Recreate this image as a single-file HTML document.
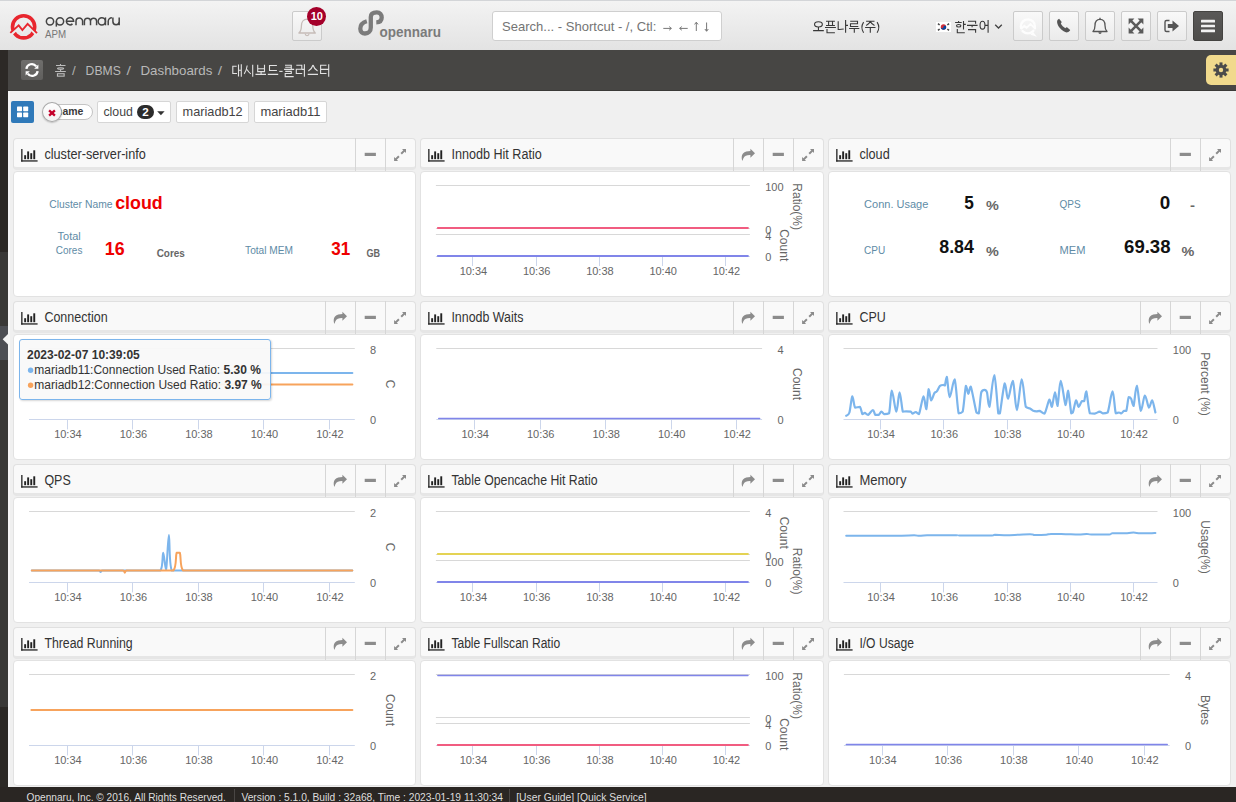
<!DOCTYPE html>
<html><head><meta charset="utf-8"><title>dashboard</title>
<style>
*{box-sizing:border-box;margin:0;padding:0}
html,body{width:1236px;height:802px;overflow:hidden}
body{position:relative;background:#f0f0f0;font-family:"Liberation Sans",sans-serif;color:#333}
.a{position:absolute}
#hdr{left:0;top:0;width:1236px;height:50px;background:linear-gradient(#f3f3f3,#e3e3e3);border-top:1px solid #d3d5d8}
#bc{left:0;top:50px;width:1236px;height:40.5px;background:#474644;border-bottom:1px solid #3b3a38}
#foot{left:0;top:786.7px;width:1236px;height:16px;background:#2a2623;color:#dcdcdc;font-size:11.5px;line-height:16px;white-space:nowrap}
.hb{width:30px;height:30px;border:1px solid #cbcbcb;border-radius:2px;background:linear-gradient(#f9f9f9,#ebebeb)}
.ph{height:32px;background:#f9f9f9;border:1px solid #e0e0e0;border-bottom:3px solid #e6e6e6;border-radius:4px}
.pb{background:#fff;border:1px solid #e2e2e2;border-radius:4px}
.pt{left:30px;top:6px;font-size:14px;color:#333;white-space:nowrap;line-height:16px}
.dv{top:-1px;width:1px;height:33px;background:#d6d6d6}
.tag{height:21px;border:1px solid #d6d6d6;background:#fff;border-radius:2px;font-size:13.5px;color:#555;line-height:19px;white-space:nowrap;text-align:center}
.lb{color:#5f8ba5;font-size:11.5px;white-space:nowrap}
.rv{color:#e80000;font-weight:bold;white-space:nowrap}
.un{color:#555;font-weight:bold;font-size:11px;white-space:nowrap}
.bv{color:#111;font-weight:bold;font-size:18.5px;white-space:nowrap}
.bu{color:#555;font-weight:bold;font-size:13px;white-space:nowrap}
</style></head><body>
<div id="hdr" class="a"></div>
<svg class="a" style="left:8px;top:11px" width="34" height="32" viewBox="0 0 34 32">
<circle cx="15.6" cy="15.8" r="11.1" fill="none" stroke="#e8262e" stroke-width="3.6"/>
<polyline points="2.3,23.9 10.7,16.5 14.4,21.2 19.6,14.9 29,24.2" fill="none" stroke="#ededed" stroke-width="2.6"/>
<polyline points="2.3,21.9 10.7,14.4 14.4,19.1 19.6,12.8 29,22.1" fill="none" stroke="#e8262e" stroke-width="1.9"/>
</svg>
<svg class="a" style="left:44px;top:14px" width="80" height="16" viewBox="0 0 80 16">
<g fill="none" stroke="#444" stroke-width="1.5" stroke-linecap="butt">
<circle cx="6" cy="7.3" r="3.65"/>
<circle cx="16" cy="7.3" r="3.65"/><line x1="12.35" y1="7.3" x2="12.35" y2="12.6"/>
<path d="M22.25 7.3 H29.65 A3.65 3.65 0 1 0 28.5 9.9"/>
<path d="M32 11.3 V7.3 A3.3 3.3 0 0 1 38.6 7.3 V11.3"/>
<path d="M40.4 11.3 V7.3 A3.05 3.05 0 0 1 46.5 7.3 V11.3 M46.5 7.3 A3.05 3.05 0 0 1 52.6 7.3 V11.3"/>
<circle cx="57.8" cy="7.3" r="3.65"/><line x1="61.45" y1="3.4" x2="61.45" y2="11.3"/>
<path d="M64.2 11.3 V7.3 A3.7 3.7 0 0 1 67.9 3.65"/>
<path d="M68.9 3.4 V7.5 A3.15 3.15 0 0 0 75.2 7.5 M75.2 3.4 V11.3"/>
</g></svg>
<div class="a hb" style="left:292px;top:11px;width:30px;height:30px"></div>
<svg class="a" style="left:280px;top:0" width="50" height="50" viewBox="280 0 50 50">
<path d="M298.9 33 C300.9 31.3 301.4 29 301.4 26 C301.4 21.8 303.9 19.2 307.1 19.2 C310.3 19.2 312.8 21.8 312.8 26 C312.8 29 313.3 31.3 315.3 33 Z" fill="none" stroke="#c6bcb8" stroke-width="1.3" stroke-linejoin="round"/>
<path d="M305.2 33.8 A1.9 1.9 0 0 0 309 33.8" fill="none" stroke="#c6bcb8" stroke-width="1.2"/>
</svg>
<div class="a" style="left:307.4px;top:7px;width:18.8px;height:18.8px;border-radius:50%;background:#a4002a;color:#fff;font-size:11px;font-weight:bold;text-align:center;line-height:18.8px">10</div>
<svg class="a" style="left:0;top:0" width="460" height="50" viewBox="0 0 460 50">
<path d="M366.8 21.3 C362.5 22.5 360.3 25.5 360.3 28.8 C360.3 32 362.5 33.5 365 33.5 C368.5 33.5 370.8 31 370.8 27.5 V17 C370.8 13.5 373.5 12.4 376.8 12.4 C380 12.4 381.7 14.8 381.7 17.5 C381.7 20.5 379.5 22.2 376.3 22.3" fill="none" stroke="#7b7b7b" stroke-width="4.3"/>
</svg><div class="a" style="left:492px;top:11px;width:230px;height:30px;background:#fff;border:1px solid #cfcfcf;border-radius:3px"></div>
<svg class="a" style="left:660px;top:20px" width="52" height="14" viewBox="0 0 52 14"><g stroke="#777" stroke-width="1" fill="none">
<line x1="3.3" y1="8.4" x2="11.2" y2="8.4"/><polyline points="9.2,6.6 11.4,8.4 9.2,10.2"/>
<line x1="19.8" y1="8.4" x2="27.7" y2="8.4"/><polyline points="21.8,6.6 19.6,8.4 21.8,10.2"/>
<line x1="36.3" y1="2.5" x2="36.3" y2="11"/><polyline points="34.6,4.4 36.3,2.2 38,4.4"/>
<line x1="46.6" y1="2.5" x2="46.6" y2="11"/><polyline points="44.9,9 46.6,11.3 48.3,9"/>
</g></svg>
<svg class="a" style="left:935.5px;top:21.5px" width="15" height="10" viewBox="0 0 15 10">
<rect width="15" height="10" fill="#fff"/>
<circle cx="7.5" cy="5" r="2.7" fill="#cd2e3a"/>
<path d="M4.8 5 A2.7 2.7 0 0 0 10.2 5 A1.35 1.35 0 0 0 7.5 5 A1.35 1.35 0 0 1 4.8 5" fill="#0047a0"/>
<g stroke="#444" stroke-width="1.5"><line x1="2" y1="1.6" x2="3.6" y2="3"/><line x1="11.4" y1="7" x2="13" y2="8.4"/><line x1="13" y1="1.6" x2="11.4" y2="3"/><line x1="3.6" y1="7" x2="2" y2="8.4"/></g>
</svg>
<svg class="a" style="left:994px;top:22.5px" width="9" height="7" viewBox="0 0 9 7"><polyline points="1.2,1.8 4.5,5 7.8,1.8" fill="none" stroke="#444" stroke-width="1.3"/></svg>
<div class="a hb" style="left:1013px;top:11px;height:30px"></div>
<div class="a hb" style="left:1049px;top:11px;height:30px"></div>
<div class="a hb" style="left:1085px;top:11px;height:30px"></div>
<div class="a hb" style="left:1121px;top:11px;height:30px"></div>
<div class="a hb" style="left:1157px;top:11px;height:30px"></div>
<div class="a" style="left:1193px;top:11px;width:30px;height:30px;border-radius:2px;background:linear-gradient(#5a5958,#4e4d4b);border:1px solid #444341"></div>
<svg class="a" style="left:1013px;top:11px" width="216" height="30" viewBox="0 0 216 30">
<g transform="translate(14.9,15.4)">
 <circle cx="0" cy="0" r="7.05" fill="none" stroke="#fdfdfd" stroke-width="2.3"/>
 <polyline points="-7.8,3.9 -3.6,0.7 -1.3,2.5 2.7,-1.1 7.9,3.9" fill="none" stroke="#f1f1f1" stroke-width="2.2"/>
 <polyline points="-7.1,2.7 -3.6,-0.5 -1.3,1.3 2.7,-2.3 7.7,2.7" fill="none" stroke="#fdfdfd" stroke-width="2"/>
 <path d="M5.2 5.6 L9 10.3 L2.6 8.3 Z" fill="#fdfdfd"/>
</g>
<g transform="translate(50.8,14.5) scale(1.1)">
 <path d="M-5.5 -5.2 C-6.5 -4 -6.3 -1.5 -4 1.8 C-1.6 4.8 1.5 6.6 3.3 6.2 C4.5 6 5.6 5 5.8 4.2 L3.2 1.8 C2.6 1.5 2 1.8 1.4 2.4 C0 1.9 -2.2 -0.5 -2.7 -1.8 C-2.1 -2.4 -1.8 -3 -2.2 -3.7 L-4.3 -6.2 C-4.7 -6.1 -5.1 -5.7 -5.5 -5.2 Z" fill="#555"/>
</g>
<g transform="translate(87,15)">
 <path d="M-7 5.5 C-5.5 4 -5 2.6 -5 -0.5 C-5 -4.5 -3 -6.6 0 -6.6 C3 -6.6 5 -4.5 5 -0.5 C5 2.6 5.5 4 7 5.5 Z" fill="none" stroke="#555" stroke-width="1.3" stroke-linejoin="round"/>
 <line x1="0" y1="-8.2" x2="0" y2="-6.6" stroke="#555" stroke-width="1.3"/>
 <path d="M-1.6 6.3 A1.6 1.6 0 0 0 1.6 6.3" fill="#555"/>
</g>
<g transform="translate(123,15)" fill="#5a5a5a">
 <path d="M-7.4 -7.4 H-1.6 L-7.4 -1.6 Z"/><path d="M7.4 -7.4 V-1.6 L1.6 -7.4 Z"/><path d="M-7.4 7.4 V1.6 L-1.6 7.4 Z"/><path d="M7.4 7.4 H1.6 L7.4 1.6 Z"/>
 <path d="M-4.8 -4.8 L4.8 4.8 M4.8 -4.8 L-4.8 4.8" stroke="#5a5a5a" stroke-width="2.5"/>
</g>
<g transform="translate(159,15)">
 <path d="M-2.5 -5.5 H-5.5 C-6.3 -5.5 -7 -4.8 -7 -4 V4 C-7 4.8 -6.3 5.5 -5.5 5.5 H-2.5" fill="none" stroke="#555" stroke-width="1.4"/>
 <path d="M-4.2 -2 H0.5 V-5.5 L7 0 L0.5 5.5 V2 H-4.2 Z" fill="#555"/>
</g>
<g transform="translate(195,15)" fill="#f2f2f2">
 <rect x="-7" y="-6.2" width="14" height="2.6" rx="0.5"/><rect x="-7" y="-1.3" width="14" height="2.6" rx="0.5"/><rect x="-7" y="3.6" width="14" height="2.6" rx="0.5"/>
</g>
</svg>
<div id="bc" class="a"></div>
<div class="a" style="left:21.1px;top:60.1px;width:21.7px;height:19.7px;background:linear-gradient(#6f6e6c,#605f5d);border-radius:2px"></div>
<svg class="a" style="left:22.3px;top:59.9px" width="20" height="20" viewBox="-10 -10 20 20">
<g fill="#fff"><path d="M-5.6 -1.1 A5.4 5.4 0 0 1 4.2 -3.6" fill="none" stroke="#fff" stroke-width="2.3"/>
<path d="M6.4 -5.4 V-1.2 H2.2 Z"/>
<path d="M5.6 1.1 A5.4 5.4 0 0 1 -4.2 3.6" fill="none" stroke="#fff" stroke-width="2.3"/>
<path d="M-6.4 5.4 V1.2 H-2.2 Z"/></g></svg>
<div class="a" style="left:1206px;top:54.7px;width:36px;height:30.2px;background:#f1da8d;border-radius:5px"></div>
<svg class="a" style="left:1212px;top:61px" width="18" height="18" viewBox="-9 -9 18 18">
<g fill="#4b4b4b">
<rect x="-1.5" y="-7.6" width="3" height="4" transform="rotate(0)"/><rect x="-1.5" y="-7.6" width="3" height="4" transform="rotate(45)"/><rect x="-1.5" y="-7.6" width="3" height="4" transform="rotate(90)"/><rect x="-1.5" y="-7.6" width="3" height="4" transform="rotate(135)"/><rect x="-1.5" y="-7.6" width="3" height="4" transform="rotate(180)"/><rect x="-1.5" y="-7.6" width="3" height="4" transform="rotate(225)"/><rect x="-1.5" y="-7.6" width="3" height="4" transform="rotate(270)"/><rect x="-1.5" y="-7.6" width="3" height="4" transform="rotate(315)"/><circle r="5.3"/></g><circle r="2.2" fill="#f1da8d"/></svg>
<div class="a" style="left:0;top:50px;width:8px;height:202px;background:#2c2926"></div>
<div class="a" style="left:0;top:252px;width:8px;height:73.5px;background:#3a3937"></div>
<div class="a" style="left:0;top:326px;width:8px;height:34px;background:#4d4f54"></div>
<svg class="a" style="left:2px;top:333.5px" width="6" height="11" viewBox="0 0 6 11"><path d="M6 0 L0.7 5.2 L6 10.4 Z" fill="#f4f4f4"/></svg>
<div class="a" style="left:0;top:360px;width:8px;height:347px;background:#3a3937"></div>
<div class="a" style="left:0;top:707px;width:8px;height:80px;background:#2c2926"></div>
<div class="a" style="left:8px;top:90.5px;width:1.5px;height:696px;background:#f6f6f6"></div>
<div class="a" style="left:11px;top:101px;width:23px;height:22px;background:#2f79b9;border-radius:2px"></div>
<svg class="a" style="left:11px;top:101px" width="23" height="22" viewBox="0 0 23 22"><g fill="#fff">
<rect x="6" y="5.6" width="5" height="4.6" rx="0.6"/><rect x="12.2" y="5.6" width="5" height="4.6" rx="0.6"/>
<rect x="6" y="11.6" width="5" height="4.6" rx="0.6"/><rect x="12.2" y="11.6" width="5" height="4.6" rx="0.6"/></g></svg>
<div class="a" style="left:47px;top:104.3px;width:46px;height:15.8px;background:#fff;border:1px solid #c4c4c4;border-radius:8px"></div>
<div class="a" style="left:56.4px;top:106.4px;font-size:11px;line-height:11px;font-weight:bold;color:#3a3a3a;white-space:nowrap;transform:scaleX(0.95);transform-origin:0 0">name</div>
<div class="a" style="left:42.1px;top:102.2px;width:19.8px;height:20px;border-radius:50%;background:linear-gradient(#fdfdfd,#f3f3f3);border:1px solid #a9a9a9;box-shadow:0 1px 1.5px rgba(0,0,0,0.2)"></div>
<svg class="a" style="left:47.2px;top:107.5px" width="10" height="10" viewBox="0 0 10 10"><g stroke="#c4002b" stroke-width="2.3"><line x1="2.1" y1="2.3" x2="7.9" y2="7.7"/><line x1="7.9" y1="2.3" x2="2.1" y2="7.7"/></g></svg>
<div class="a tag" style="left:97px;top:101px;width:74px;height:22px"></div>

<div class="a" style="left:137.1px;top:104.8px;width:16.8px;height:14px;border-radius:7px;background:#2b2b2b"></div>
<svg class="a" style="left:157px;top:110.7px" width="8" height="5" viewBox="0 0 8 5"><path d="M0.2 0.2 H7.6 L3.9 4.3 Z" fill="#333"/></svg>
<div class="a tag" style="left:176px;top:101px;width:73px;height:22px"></div>
<div class="a tag" style="left:254px;top:101px;width:73px;height:22px"></div>

<div class="a ph" style="left:13px;top:138px;width:403px"><svg class="a" style="left:6.6px;top:9.5px" width="18" height="14" viewBox="0 0 18 14"><g fill="#222">
<rect x="0.2" y="0" width="1.3" height="12.6"/><rect x="0.2" y="11.3" width="16.4" height="1.3"/>
<rect x="3.2" y="6.2" width="1.9" height="4"/><rect x="6.2" y="2.4" width="1.9" height="7.8"/><rect x="9.3" y="4.2" width="1.9" height="6"/><rect x="12.3" y="1.3" width="1.9" height="8.9"/></g></svg><div class="a dv" style="left:371px"></div><div class="a dv" style="left:341px"></div></div>
<svg class="a" style="left:326px;top:138px" width="90" height="32" viewBox="0 0 90 32"><g fill="#8c8c8c">
<rect x="38.7" y="14.8" width="11.2" height="3.2"/>
<path d="M76 11 H80 V15 Z M68.1 19 V23 H72.1 Z"/><path d="M78.6 12.4 L75.2 15.8 M72.9 18.2 L69.5 21.6" stroke="#8c8c8c" stroke-width="2"/></g></svg>
<div class="a pb" style="left:13px;top:171px;width:403px;height:126px"></div>
<div class="a ph" style="left:420px;top:138px;width:404px"><svg class="a" style="left:6.6px;top:9.5px" width="18" height="14" viewBox="0 0 18 14"><g fill="#222">
<rect x="0.2" y="0" width="1.3" height="12.6"/><rect x="0.2" y="11.3" width="16.4" height="1.3"/>
<rect x="3.2" y="6.2" width="1.9" height="4"/><rect x="6.2" y="2.4" width="1.9" height="7.8"/><rect x="9.3" y="4.2" width="1.9" height="6"/><rect x="12.3" y="1.3" width="1.9" height="8.9"/></g></svg><div class="a dv" style="left:372px"></div><div class="a dv" style="left:342px"></div><div class="a dv" style="left:312px"></div></div>
<svg class="a" style="left:734px;top:138px" width="90" height="32" viewBox="0 0 90 32"><g fill="#8c8c8c">
<rect x="38.7" y="14.8" width="11.2" height="3.2"/>
<path d="M76 11 H80 V15 Z M68.1 19 V23 H72.1 Z"/><path d="M78.6 12.4 L75.2 15.8 M72.9 18.2 L69.5 21.6" stroke="#8c8c8c" stroke-width="2"/><path d="M16.4 10.8 L21 15.2 L16.4 19.7 V17.1 C13 17 10.5 17.8 9.3 20.5 L8.4 23.1 C7.3 20 7.4 17.5 9 15.5 C10.8 13.5 13.5 12.9 16.4 12.9 Z"/></g></svg>
<div class="a pb" style="left:420px;top:171px;width:404px;height:126px"></div>
<div class="a ph" style="left:828px;top:138px;width:403px"><svg class="a" style="left:6.6px;top:9.5px" width="18" height="14" viewBox="0 0 18 14"><g fill="#222">
<rect x="0.2" y="0" width="1.3" height="12.6"/><rect x="0.2" y="11.3" width="16.4" height="1.3"/>
<rect x="3.2" y="6.2" width="1.9" height="4"/><rect x="6.2" y="2.4" width="1.9" height="7.8"/><rect x="9.3" y="4.2" width="1.9" height="6"/><rect x="12.3" y="1.3" width="1.9" height="8.9"/></g></svg><div class="a dv" style="left:371px"></div><div class="a dv" style="left:341px"></div></div>
<svg class="a" style="left:1141px;top:138px" width="90" height="32" viewBox="0 0 90 32"><g fill="#8c8c8c">
<rect x="38.7" y="14.8" width="11.2" height="3.2"/>
<path d="M76 11 H80 V15 Z M68.1 19 V23 H72.1 Z"/><path d="M78.6 12.4 L75.2 15.8 M72.9 18.2 L69.5 21.6" stroke="#8c8c8c" stroke-width="2"/></g></svg>
<div class="a pb" style="left:828px;top:171px;width:403px;height:126px"></div>
<div class="a ph" style="left:13px;top:301px;width:403px"><svg class="a" style="left:6.6px;top:9.5px" width="18" height="14" viewBox="0 0 18 14"><g fill="#222">
<rect x="0.2" y="0" width="1.3" height="12.6"/><rect x="0.2" y="11.3" width="16.4" height="1.3"/>
<rect x="3.2" y="6.2" width="1.9" height="4"/><rect x="6.2" y="2.4" width="1.9" height="7.8"/><rect x="9.3" y="4.2" width="1.9" height="6"/><rect x="12.3" y="1.3" width="1.9" height="8.9"/></g></svg><div class="a dv" style="left:371px"></div><div class="a dv" style="left:341px"></div><div class="a dv" style="left:311px"></div></div>
<svg class="a" style="left:326px;top:301px" width="90" height="32" viewBox="0 0 90 32"><g fill="#8c8c8c">
<rect x="38.7" y="14.8" width="11.2" height="3.2"/>
<path d="M76 11 H80 V15 Z M68.1 19 V23 H72.1 Z"/><path d="M78.6 12.4 L75.2 15.8 M72.9 18.2 L69.5 21.6" stroke="#8c8c8c" stroke-width="2"/><path d="M16.4 10.8 L21 15.2 L16.4 19.7 V17.1 C13 17 10.5 17.8 9.3 20.5 L8.4 23.1 C7.3 20 7.4 17.5 9 15.5 C10.8 13.5 13.5 12.9 16.4 12.9 Z"/></g></svg>
<div class="a pb" style="left:13px;top:334px;width:403px;height:126px"></div>
<div class="a ph" style="left:420px;top:301px;width:404px"><svg class="a" style="left:6.6px;top:9.5px" width="18" height="14" viewBox="0 0 18 14"><g fill="#222">
<rect x="0.2" y="0" width="1.3" height="12.6"/><rect x="0.2" y="11.3" width="16.4" height="1.3"/>
<rect x="3.2" y="6.2" width="1.9" height="4"/><rect x="6.2" y="2.4" width="1.9" height="7.8"/><rect x="9.3" y="4.2" width="1.9" height="6"/><rect x="12.3" y="1.3" width="1.9" height="8.9"/></g></svg><div class="a dv" style="left:372px"></div><div class="a dv" style="left:342px"></div><div class="a dv" style="left:312px"></div></div>
<svg class="a" style="left:734px;top:301px" width="90" height="32" viewBox="0 0 90 32"><g fill="#8c8c8c">
<rect x="38.7" y="14.8" width="11.2" height="3.2"/>
<path d="M76 11 H80 V15 Z M68.1 19 V23 H72.1 Z"/><path d="M78.6 12.4 L75.2 15.8 M72.9 18.2 L69.5 21.6" stroke="#8c8c8c" stroke-width="2"/><path d="M16.4 10.8 L21 15.2 L16.4 19.7 V17.1 C13 17 10.5 17.8 9.3 20.5 L8.4 23.1 C7.3 20 7.4 17.5 9 15.5 C10.8 13.5 13.5 12.9 16.4 12.9 Z"/></g></svg>
<div class="a pb" style="left:420px;top:334px;width:404px;height:126px"></div>
<div class="a ph" style="left:828px;top:301px;width:403px"><svg class="a" style="left:6.6px;top:9.5px" width="18" height="14" viewBox="0 0 18 14"><g fill="#222">
<rect x="0.2" y="0" width="1.3" height="12.6"/><rect x="0.2" y="11.3" width="16.4" height="1.3"/>
<rect x="3.2" y="6.2" width="1.9" height="4"/><rect x="6.2" y="2.4" width="1.9" height="7.8"/><rect x="9.3" y="4.2" width="1.9" height="6"/><rect x="12.3" y="1.3" width="1.9" height="8.9"/></g></svg><div class="a dv" style="left:371px"></div><div class="a dv" style="left:341px"></div><div class="a dv" style="left:311px"></div></div>
<svg class="a" style="left:1141px;top:301px" width="90" height="32" viewBox="0 0 90 32"><g fill="#8c8c8c">
<rect x="38.7" y="14.8" width="11.2" height="3.2"/>
<path d="M76 11 H80 V15 Z M68.1 19 V23 H72.1 Z"/><path d="M78.6 12.4 L75.2 15.8 M72.9 18.2 L69.5 21.6" stroke="#8c8c8c" stroke-width="2"/><path d="M16.4 10.8 L21 15.2 L16.4 19.7 V17.1 C13 17 10.5 17.8 9.3 20.5 L8.4 23.1 C7.3 20 7.4 17.5 9 15.5 C10.8 13.5 13.5 12.9 16.4 12.9 Z"/></g></svg>
<div class="a pb" style="left:828px;top:334px;width:403px;height:126px"></div>
<div class="a ph" style="left:13px;top:464px;width:403px"><svg class="a" style="left:6.6px;top:9.5px" width="18" height="14" viewBox="0 0 18 14"><g fill="#222">
<rect x="0.2" y="0" width="1.3" height="12.6"/><rect x="0.2" y="11.3" width="16.4" height="1.3"/>
<rect x="3.2" y="6.2" width="1.9" height="4"/><rect x="6.2" y="2.4" width="1.9" height="7.8"/><rect x="9.3" y="4.2" width="1.9" height="6"/><rect x="12.3" y="1.3" width="1.9" height="8.9"/></g></svg><div class="a dv" style="left:371px"></div><div class="a dv" style="left:341px"></div><div class="a dv" style="left:311px"></div></div>
<svg class="a" style="left:326px;top:464px" width="90" height="32" viewBox="0 0 90 32"><g fill="#8c8c8c">
<rect x="38.7" y="14.8" width="11.2" height="3.2"/>
<path d="M76 11 H80 V15 Z M68.1 19 V23 H72.1 Z"/><path d="M78.6 12.4 L75.2 15.8 M72.9 18.2 L69.5 21.6" stroke="#8c8c8c" stroke-width="2"/><path d="M16.4 10.8 L21 15.2 L16.4 19.7 V17.1 C13 17 10.5 17.8 9.3 20.5 L8.4 23.1 C7.3 20 7.4 17.5 9 15.5 C10.8 13.5 13.5 12.9 16.4 12.9 Z"/></g></svg>
<div class="a pb" style="left:13px;top:497px;width:403px;height:126px"></div>
<div class="a ph" style="left:420px;top:464px;width:404px"><svg class="a" style="left:6.6px;top:9.5px" width="18" height="14" viewBox="0 0 18 14"><g fill="#222">
<rect x="0.2" y="0" width="1.3" height="12.6"/><rect x="0.2" y="11.3" width="16.4" height="1.3"/>
<rect x="3.2" y="6.2" width="1.9" height="4"/><rect x="6.2" y="2.4" width="1.9" height="7.8"/><rect x="9.3" y="4.2" width="1.9" height="6"/><rect x="12.3" y="1.3" width="1.9" height="8.9"/></g></svg><div class="a dv" style="left:372px"></div><div class="a dv" style="left:342px"></div><div class="a dv" style="left:312px"></div></div>
<svg class="a" style="left:734px;top:464px" width="90" height="32" viewBox="0 0 90 32"><g fill="#8c8c8c">
<rect x="38.7" y="14.8" width="11.2" height="3.2"/>
<path d="M76 11 H80 V15 Z M68.1 19 V23 H72.1 Z"/><path d="M78.6 12.4 L75.2 15.8 M72.9 18.2 L69.5 21.6" stroke="#8c8c8c" stroke-width="2"/><path d="M16.4 10.8 L21 15.2 L16.4 19.7 V17.1 C13 17 10.5 17.8 9.3 20.5 L8.4 23.1 C7.3 20 7.4 17.5 9 15.5 C10.8 13.5 13.5 12.9 16.4 12.9 Z"/></g></svg>
<div class="a pb" style="left:420px;top:497px;width:404px;height:126px"></div>
<div class="a ph" style="left:828px;top:464px;width:403px"><svg class="a" style="left:6.6px;top:9.5px" width="18" height="14" viewBox="0 0 18 14"><g fill="#222">
<rect x="0.2" y="0" width="1.3" height="12.6"/><rect x="0.2" y="11.3" width="16.4" height="1.3"/>
<rect x="3.2" y="6.2" width="1.9" height="4"/><rect x="6.2" y="2.4" width="1.9" height="7.8"/><rect x="9.3" y="4.2" width="1.9" height="6"/><rect x="12.3" y="1.3" width="1.9" height="8.9"/></g></svg><div class="a dv" style="left:371px"></div><div class="a dv" style="left:341px"></div><div class="a dv" style="left:311px"></div></div>
<svg class="a" style="left:1141px;top:464px" width="90" height="32" viewBox="0 0 90 32"><g fill="#8c8c8c">
<rect x="38.7" y="14.8" width="11.2" height="3.2"/>
<path d="M76 11 H80 V15 Z M68.1 19 V23 H72.1 Z"/><path d="M78.6 12.4 L75.2 15.8 M72.9 18.2 L69.5 21.6" stroke="#8c8c8c" stroke-width="2"/><path d="M16.4 10.8 L21 15.2 L16.4 19.7 V17.1 C13 17 10.5 17.8 9.3 20.5 L8.4 23.1 C7.3 20 7.4 17.5 9 15.5 C10.8 13.5 13.5 12.9 16.4 12.9 Z"/></g></svg>
<div class="a pb" style="left:828px;top:497px;width:403px;height:126px"></div>
<div class="a ph" style="left:13px;top:627px;width:403px"><svg class="a" style="left:6.6px;top:9.5px" width="18" height="14" viewBox="0 0 18 14"><g fill="#222">
<rect x="0.2" y="0" width="1.3" height="12.6"/><rect x="0.2" y="11.3" width="16.4" height="1.3"/>
<rect x="3.2" y="6.2" width="1.9" height="4"/><rect x="6.2" y="2.4" width="1.9" height="7.8"/><rect x="9.3" y="4.2" width="1.9" height="6"/><rect x="12.3" y="1.3" width="1.9" height="8.9"/></g></svg><div class="a dv" style="left:371px"></div><div class="a dv" style="left:341px"></div><div class="a dv" style="left:311px"></div></div>
<svg class="a" style="left:326px;top:627px" width="90" height="32" viewBox="0 0 90 32"><g fill="#8c8c8c">
<rect x="38.7" y="14.8" width="11.2" height="3.2"/>
<path d="M76 11 H80 V15 Z M68.1 19 V23 H72.1 Z"/><path d="M78.6 12.4 L75.2 15.8 M72.9 18.2 L69.5 21.6" stroke="#8c8c8c" stroke-width="2"/><path d="M16.4 10.8 L21 15.2 L16.4 19.7 V17.1 C13 17 10.5 17.8 9.3 20.5 L8.4 23.1 C7.3 20 7.4 17.5 9 15.5 C10.8 13.5 13.5 12.9 16.4 12.9 Z"/></g></svg>
<div class="a pb" style="left:13px;top:660px;width:403px;height:126px"></div>
<div class="a ph" style="left:420px;top:627px;width:404px"><svg class="a" style="left:6.6px;top:9.5px" width="18" height="14" viewBox="0 0 18 14"><g fill="#222">
<rect x="0.2" y="0" width="1.3" height="12.6"/><rect x="0.2" y="11.3" width="16.4" height="1.3"/>
<rect x="3.2" y="6.2" width="1.9" height="4"/><rect x="6.2" y="2.4" width="1.9" height="7.8"/><rect x="9.3" y="4.2" width="1.9" height="6"/><rect x="12.3" y="1.3" width="1.9" height="8.9"/></g></svg><div class="a dv" style="left:372px"></div><div class="a dv" style="left:342px"></div><div class="a dv" style="left:312px"></div></div>
<svg class="a" style="left:734px;top:627px" width="90" height="32" viewBox="0 0 90 32"><g fill="#8c8c8c">
<rect x="38.7" y="14.8" width="11.2" height="3.2"/>
<path d="M76 11 H80 V15 Z M68.1 19 V23 H72.1 Z"/><path d="M78.6 12.4 L75.2 15.8 M72.9 18.2 L69.5 21.6" stroke="#8c8c8c" stroke-width="2"/><path d="M16.4 10.8 L21 15.2 L16.4 19.7 V17.1 C13 17 10.5 17.8 9.3 20.5 L8.4 23.1 C7.3 20 7.4 17.5 9 15.5 C10.8 13.5 13.5 12.9 16.4 12.9 Z"/></g></svg>
<div class="a pb" style="left:420px;top:660px;width:404px;height:126px"></div>
<div class="a ph" style="left:828px;top:627px;width:403px"><svg class="a" style="left:6.6px;top:9.5px" width="18" height="14" viewBox="0 0 18 14"><g fill="#222">
<rect x="0.2" y="0" width="1.3" height="12.6"/><rect x="0.2" y="11.3" width="16.4" height="1.3"/>
<rect x="3.2" y="6.2" width="1.9" height="4"/><rect x="6.2" y="2.4" width="1.9" height="7.8"/><rect x="9.3" y="4.2" width="1.9" height="6"/><rect x="12.3" y="1.3" width="1.9" height="8.9"/></g></svg><div class="a dv" style="left:371px"></div><div class="a dv" style="left:341px"></div><div class="a dv" style="left:311px"></div></div>
<svg class="a" style="left:1141px;top:627px" width="90" height="32" viewBox="0 0 90 32"><g fill="#8c8c8c">
<rect x="38.7" y="14.8" width="11.2" height="3.2"/>
<path d="M76 11 H80 V15 Z M68.1 19 V23 H72.1 Z"/><path d="M78.6 12.4 L75.2 15.8 M72.9 18.2 L69.5 21.6" stroke="#8c8c8c" stroke-width="2"/><path d="M16.4 10.8 L21 15.2 L16.4 19.7 V17.1 C13 17 10.5 17.8 9.3 20.5 L8.4 23.1 C7.3 20 7.4 17.5 9 15.5 C10.8 13.5 13.5 12.9 16.4 12.9 Z"/></g></svg>
<div class="a pb" style="left:828px;top:660px;width:403px;height:126px"></div>
<div id="foot" class="a"></div><div class="a" style="left:234.3px;top:789px;width:1px;height:13px;background:#4a4644"></div><div class="a" style="left:509px;top:789px;width:1px;height:13px;background:#4a4644"></div><svg class="a" style="left:0;top:0" width="1236" height="802" font-family="Liberation Sans, sans-serif">
<line x1="435.9" y1="185.5" x2="749.9" y2="185.5" stroke="#d8d8d8" stroke-width="1"/>
<line x1="435.9" y1="228.5" x2="749.9" y2="228.5" stroke="#d8d8d8" stroke-width="1"/>
<line x1="435.9" y1="234.5" x2="749.9" y2="234.5" stroke="#d8d8d8" stroke-width="1"/>
<line x1="435.9" y1="256.5" x2="749.9" y2="256.5" stroke="#ccd6eb" stroke-width="1"/>
<line x1="472.5" y1="256" x2="472.5" y2="266" stroke="#ccd6eb" stroke-width="1"/>
<text x="473.4" y="274.5" text-anchor="middle" font-size="11" fill="#666666" textLength="27.53" lengthAdjust="spacingAndGlyphs" >10:34</text>
<line x1="536.5" y1="256" x2="536.5" y2="266" stroke="#ccd6eb" stroke-width="1"/>
<text x="536.65" y="274.5" text-anchor="middle" font-size="11" fill="#666666" textLength="27.53" lengthAdjust="spacingAndGlyphs" >10:36</text>
<line x1="599.5" y1="256" x2="599.5" y2="266" stroke="#ccd6eb" stroke-width="1"/>
<text x="599.9" y="274.5" text-anchor="middle" font-size="11" fill="#666666" textLength="27.53" lengthAdjust="spacingAndGlyphs" >10:38</text>
<line x1="662.5" y1="256" x2="662.5" y2="266" stroke="#ccd6eb" stroke-width="1"/>
<text x="663.15" y="274.5" text-anchor="middle" font-size="11" fill="#666666" textLength="27.53" lengthAdjust="spacingAndGlyphs" >10:40</text>
<line x1="725.5" y1="256" x2="725.5" y2="266" stroke="#ccd6eb" stroke-width="1"/>
<text x="726.4" y="274.5" text-anchor="middle" font-size="11" fill="#666666" textLength="27.53" lengthAdjust="spacingAndGlyphs" >10:42</text>
<text x="765.2" y="190.9" text-anchor="start" font-size="11" fill="#666666" textLength="18.36" lengthAdjust="spacingAndGlyphs" >100</text>
<text x="765.2" y="233.5" text-anchor="start" font-size="11" fill="#666666" textLength="6.12" lengthAdjust="spacingAndGlyphs" >0</text>
<text x="765.2" y="239.9" text-anchor="start" font-size="11" fill="#666666" textLength="6.12" lengthAdjust="spacingAndGlyphs" >4</text>
<text x="765.2" y="260.5" text-anchor="start" font-size="11" fill="#666666" textLength="6.12" lengthAdjust="spacingAndGlyphs" >0</text>
<text transform="translate(793,206.7) rotate(90)" text-anchor="middle" font-size="12" fill="#666666" textLength="46.69" lengthAdjust="spacingAndGlyphs">Ratio(%)</text>
<text transform="translate(780.1,245.2) rotate(90)" text-anchor="middle" font-size="12" fill="#666666" textLength="32.03" lengthAdjust="spacingAndGlyphs">Count</text>
<polyline points="437.9,228 747.9,228" fill="none" stroke="#f15c80" stroke-width="2" stroke-linejoin="round" stroke-linecap="round"/>
<polyline points="437.9,256 747.9,256" fill="none" stroke="#8085e9" stroke-width="2" stroke-linejoin="round" stroke-linecap="round"/>
<line x1="435.9" y1="674.5" x2="749.9" y2="674.5" stroke="#d8d8d8" stroke-width="1"/>
<line x1="435.9" y1="717.5" x2="749.9" y2="717.5" stroke="#d8d8d8" stroke-width="1"/>
<line x1="435.9" y1="723.5" x2="749.9" y2="723.5" stroke="#d8d8d8" stroke-width="1"/>
<line x1="435.9" y1="745.5" x2="749.9" y2="745.5" stroke="#ccd6eb" stroke-width="1"/>
<line x1="472.5" y1="745" x2="472.5" y2="755" stroke="#ccd6eb" stroke-width="1"/>
<text x="473.4" y="763.5" text-anchor="middle" font-size="11" fill="#666666" textLength="27.53" lengthAdjust="spacingAndGlyphs" >10:34</text>
<line x1="536.5" y1="745" x2="536.5" y2="755" stroke="#ccd6eb" stroke-width="1"/>
<text x="536.65" y="763.5" text-anchor="middle" font-size="11" fill="#666666" textLength="27.53" lengthAdjust="spacingAndGlyphs" >10:36</text>
<line x1="599.5" y1="745" x2="599.5" y2="755" stroke="#ccd6eb" stroke-width="1"/>
<text x="599.9" y="763.5" text-anchor="middle" font-size="11" fill="#666666" textLength="27.53" lengthAdjust="spacingAndGlyphs" >10:38</text>
<line x1="662.5" y1="745" x2="662.5" y2="755" stroke="#ccd6eb" stroke-width="1"/>
<text x="663.15" y="763.5" text-anchor="middle" font-size="11" fill="#666666" textLength="27.53" lengthAdjust="spacingAndGlyphs" >10:40</text>
<line x1="725.5" y1="745" x2="725.5" y2="755" stroke="#ccd6eb" stroke-width="1"/>
<text x="726.4" y="763.5" text-anchor="middle" font-size="11" fill="#666666" textLength="27.53" lengthAdjust="spacingAndGlyphs" >10:42</text>
<text x="765.2" y="679.9" text-anchor="start" font-size="11" fill="#666666" textLength="18.36" lengthAdjust="spacingAndGlyphs" >100</text>
<text x="765.2" y="722.5" text-anchor="start" font-size="11" fill="#666666" textLength="6.12" lengthAdjust="spacingAndGlyphs" >0</text>
<text x="765.2" y="728.9" text-anchor="start" font-size="11" fill="#666666" textLength="6.12" lengthAdjust="spacingAndGlyphs" >4</text>
<text x="765.2" y="749.5" text-anchor="start" font-size="11" fill="#666666" textLength="6.12" lengthAdjust="spacingAndGlyphs" >0</text>
<text transform="translate(793,695.7) rotate(90)" text-anchor="middle" font-size="12" fill="#666666" textLength="46.69" lengthAdjust="spacingAndGlyphs">Ratio(%)</text>
<text transform="translate(780.1,734.2) rotate(90)" text-anchor="middle" font-size="12" fill="#666666" textLength="32.03" lengthAdjust="spacingAndGlyphs">Count</text>
<polyline points="437.9,675.5 747.9,675.5" fill="none" stroke="#8085e9" stroke-width="1.6" stroke-linejoin="round" stroke-linecap="round"/>
<polyline points="437.9,745 747.9,745" fill="none" stroke="#f15c80" stroke-width="2" stroke-linejoin="round" stroke-linecap="round"/>
<line x1="435.9" y1="511.5" x2="749.9" y2="511.5" stroke="#d8d8d8" stroke-width="1"/>
<line x1="435.9" y1="554.5" x2="749.9" y2="554.5" stroke="#d8d8d8" stroke-width="1"/>
<line x1="435.9" y1="560.5" x2="749.9" y2="560.5" stroke="#d8d8d8" stroke-width="1"/>
<line x1="435.9" y1="582.5" x2="749.9" y2="582.5" stroke="#ccd6eb" stroke-width="1"/>
<line x1="472.5" y1="582" x2="472.5" y2="592" stroke="#ccd6eb" stroke-width="1"/>
<text x="473.4" y="600.5" text-anchor="middle" font-size="11" fill="#666666" textLength="27.53" lengthAdjust="spacingAndGlyphs" >10:34</text>
<line x1="536.5" y1="582" x2="536.5" y2="592" stroke="#ccd6eb" stroke-width="1"/>
<text x="536.65" y="600.5" text-anchor="middle" font-size="11" fill="#666666" textLength="27.53" lengthAdjust="spacingAndGlyphs" >10:36</text>
<line x1="599.5" y1="582" x2="599.5" y2="592" stroke="#ccd6eb" stroke-width="1"/>
<text x="599.9" y="600.5" text-anchor="middle" font-size="11" fill="#666666" textLength="27.53" lengthAdjust="spacingAndGlyphs" >10:38</text>
<line x1="662.5" y1="582" x2="662.5" y2="592" stroke="#ccd6eb" stroke-width="1"/>
<text x="663.15" y="600.5" text-anchor="middle" font-size="11" fill="#666666" textLength="27.53" lengthAdjust="spacingAndGlyphs" >10:40</text>
<line x1="725.5" y1="582" x2="725.5" y2="592" stroke="#ccd6eb" stroke-width="1"/>
<text x="726.4" y="600.5" text-anchor="middle" font-size="11" fill="#666666" textLength="27.53" lengthAdjust="spacingAndGlyphs" >10:42</text>
<text x="765.2" y="516.9" text-anchor="start" font-size="11" fill="#666666" textLength="6.12" lengthAdjust="spacingAndGlyphs" >4</text>
<text x="765.2" y="559.5" text-anchor="start" font-size="11" fill="#666666" textLength="6.12" lengthAdjust="spacingAndGlyphs" >0</text>
<text x="765.2" y="565.9" text-anchor="start" font-size="11" fill="#666666" textLength="18.36" lengthAdjust="spacingAndGlyphs" >100</text>
<text x="765.2" y="586.5" text-anchor="start" font-size="11" fill="#666666" textLength="6.12" lengthAdjust="spacingAndGlyphs" >0</text>
<text transform="translate(780.1,532.7) rotate(90)" text-anchor="middle" font-size="12" fill="#666666" textLength="32.03" lengthAdjust="spacingAndGlyphs">Count</text>
<text transform="translate(793,571.2) rotate(90)" text-anchor="middle" font-size="12" fill="#666666" textLength="46.69" lengthAdjust="spacingAndGlyphs">Ratio(%)</text>
<polyline points="437.9,554 747.9,554" fill="none" stroke="#e4d354" stroke-width="2" stroke-linejoin="round" stroke-linecap="round"/>
<polyline points="437.9,582 747.9,582" fill="none" stroke="#8085e9" stroke-width="2" stroke-linejoin="round" stroke-linecap="round"/>
<line x1="843.5" y1="348.5" x2="1157.5" y2="348.5" stroke="#d8d8d8" stroke-width="1"/>
<line x1="843.5" y1="419.5" x2="1157.5" y2="419.5" stroke="#ccd6eb" stroke-width="1"/>
<line x1="880.5" y1="419.4" x2="880.5" y2="429.4" stroke="#ccd6eb" stroke-width="1"/>
<text x="881" y="437.9" text-anchor="middle" font-size="11" fill="#666666" textLength="27.53" lengthAdjust="spacingAndGlyphs" >10:34</text>
<line x1="943.5" y1="419.4" x2="943.5" y2="429.4" stroke="#ccd6eb" stroke-width="1"/>
<text x="944.25" y="437.9" text-anchor="middle" font-size="11" fill="#666666" textLength="27.53" lengthAdjust="spacingAndGlyphs" >10:36</text>
<line x1="1007.5" y1="419.4" x2="1007.5" y2="429.4" stroke="#ccd6eb" stroke-width="1"/>
<text x="1007.5" y="437.9" text-anchor="middle" font-size="11" fill="#666666" textLength="27.53" lengthAdjust="spacingAndGlyphs" >10:38</text>
<line x1="1070.5" y1="419.4" x2="1070.5" y2="429.4" stroke="#ccd6eb" stroke-width="1"/>
<text x="1070.75" y="437.9" text-anchor="middle" font-size="11" fill="#666666" textLength="27.53" lengthAdjust="spacingAndGlyphs" >10:40</text>
<line x1="1133.5" y1="419.4" x2="1133.5" y2="429.4" stroke="#ccd6eb" stroke-width="1"/>
<text x="1134" y="437.9" text-anchor="middle" font-size="11" fill="#666666" textLength="27.53" lengthAdjust="spacingAndGlyphs" >10:42</text>
<text x="1172.8" y="354.1" text-anchor="start" font-size="11" fill="#666666" textLength="18.36" lengthAdjust="spacingAndGlyphs" >100</text>
<text x="1172.8" y="423.9" text-anchor="start" font-size="11" fill="#666666" textLength="6.12" lengthAdjust="spacingAndGlyphs" >0</text>
<text transform="translate(1200.6,384) rotate(90)" text-anchor="middle" font-size="12" fill="#666666" textLength="63.36" lengthAdjust="spacingAndGlyphs">Percent (%)</text>
<path d="M846.18 415.72 C846.72 415.18 848.39 415.72 849.42 412.48 C850.44 409.24 851.39 397.11 852.33 396.3 C853.27 396.3 853.81 405.87 855.08 407.62 C856.35 407.62 858.72 406.82 859.94 406.82 C861.15 407.89 861.55 413.07 862.36 414.1 C863.17 414.1 863.85 412.96 864.79 412.96 C865.73 413.1 866.68 414.91 868.03 414.91 C869.37 414.42 871.67 410.05 872.88 410.05 C874.09 410.05 874.36 414.1 875.31 414.91 C876.25 414.91 877.52 414.91 878.54 414.91 C879.57 414.37 880.51 411.8 881.46 411.67 C882.4 411.67 882.94 413.83 884.21 414.1 C885.47 414.1 887.79 414.1 889.06 413.29 C890.33 409.38 890.6 390.9 891.81 390.63 C893.03 390.63 895.05 411.4 896.34 411.67 C897.64 411.67 898.5 392.25 899.58 392.25 C900.66 392.25 901.74 408.49 902.82 411.67 C903.89 411.67 904.7 411.35 906.05 411.35 C907.4 411.35 909.83 411.35 910.91 411.67 C911.98 412.05 911.72 413.56 912.52 413.61 C913.33 413.61 914.68 411.99 915.76 411.99 C916.84 412.07 917.7 414.1 919 414.1 C920.29 411.48 922.31 397.11 923.53 396.3 C924.74 396.3 925.42 409.24 926.28 409.24 C927.14 408.03 927.9 390.5 928.71 389.02 C929.51 389.02 930.19 399.67 931.13 400.34 C932.08 400.34 933.43 394.54 934.37 393.06 C935.31 391.58 935.85 392.66 936.8 391.44 C937.74 390.23 938.95 386.86 940.03 385.78 C941.11 384.97 942.46 385.02 943.27 384.97 C944.08 384.97 944.29 385.46 944.89 385.46 C945.48 384.11 946.02 376.88 946.83 376.88 C947.64 378.82 948.45 396.7 949.74 397.11 C951.04 397.11 953.11 379.31 954.6 379.31 C956.08 382 957.29 407.89 958.64 413.29 C959.99 413.29 961.47 413.29 962.69 411.67 C963.9 407.09 964.98 388.75 965.92 385.78 C966.87 385.78 967.54 393.74 968.35 393.87 C969.16 393.87 969.43 386.59 970.78 386.59 C972.13 389.69 975.09 408.03 976.44 412.48 C977.79 413.29 978.06 413.29 978.87 413.29 C979.68 409.92 980.35 396.16 981.29 392.25 C982.24 389.83 983.59 389.83 984.53 389.83 C985.47 389.83 986.15 389.83 986.96 392.25 C987.77 395.08 988.17 406.82 989.39 406.82 C990.6 403.98 992.76 375.26 994.24 375.26 C995.72 376.34 997.34 406.95 998.28 413.29 C999.23 413.29 998.82 413.29 999.9 413.29 C1000.98 408.3 1003.41 385.78 1004.76 383.35 C1006.11 383.35 1006.65 398.72 1007.99 398.72 C1009.34 398.32 1011.36 380.93 1012.85 380.93 C1014.33 382.81 1015.41 410.05 1016.89 410.05 C1018.38 409.78 1020.26 379.85 1021.75 379.31 C1023.23 379.31 1024.42 401.96 1025.79 406.82 C1027.17 408.43 1028.76 407.76 1030 408.43 C1031.24 409.11 1032.16 410.38 1033.24 410.86 C1034.31 411.35 1035.39 411.35 1036.47 411.35 C1037.55 411.35 1038.36 410.86 1039.71 410.86 C1041.06 411.24 1042.94 413.61 1044.56 413.61 C1046.18 411.72 1048.2 400.67 1049.42 399.53 C1050.63 399.53 1050.9 406.82 1051.84 406.82 C1052.79 405.6 1054.14 392.39 1055.08 392.25 C1056.02 392.25 1056.56 406.01 1057.51 406.01 C1058.45 404.12 1059.4 381.06 1060.74 380.93 C1062.09 380.93 1064.39 403.58 1065.6 405.2 C1066.81 405.2 1067.08 390.63 1068.03 390.63 C1068.97 391.98 1070.45 409.65 1071.26 413.29 C1072.07 413.29 1072.07 413.29 1072.88 412.48 C1073.69 410.32 1075.17 401.29 1076.12 400.34 C1077.06 400.34 1077.6 406.68 1078.54 406.82 C1079.49 406.82 1080.84 402.1 1081.78 401.15 C1082.72 401.15 1083.45 401.15 1084.21 401.15 C1084.96 399.53 1085.37 391.44 1086.31 391.44 C1087.25 393.47 1088.47 409.59 1089.87 413.29 C1091.27 413.61 1093.11 413.61 1094.72 413.61 C1096.34 413.34 1098.23 411.72 1099.58 411.67 C1100.93 411.67 1101.47 413.15 1102.82 413.29 C1104.16 413.29 1106.05 413.29 1107.67 412.48 C1109.29 408.84 1111.18 391.44 1112.52 391.44 C1113.87 391.58 1114.68 409.78 1115.76 413.29 C1116.84 413.29 1118.05 412.48 1119 412.48 C1119.94 412.48 1120.61 413.29 1121.42 413.29 C1122.23 413.02 1123.04 411.27 1123.85 410.86 C1124.66 410.86 1125.47 410.86 1126.28 410.86 C1127.09 408.57 1127.9 399.13 1128.71 397.11 C1129.51 397.11 1130.32 397.24 1131.13 398.72 C1131.94 400.21 1132.62 406.01 1133.56 406.01 C1134.5 403.85 1135.58 385.78 1136.8 385.78 C1138.01 386.59 1139.49 409.24 1140.84 410.86 C1142.19 410.86 1143.54 396.03 1144.89 395.49 C1146.24 395.49 1147.72 406.82 1148.93 407.62 C1150.15 407.62 1151.09 400.34 1152.17 400.34 C1153.25 401.15 1154.87 410.46 1155.4 412.48" fill="none" stroke="#7cb5ec" stroke-width="2.2" stroke-linejoin="round" stroke-linecap="round"/>
<line x1="843.5" y1="511.5" x2="1157.5" y2="511.5" stroke="#d8d8d8" stroke-width="1"/>
<line x1="843.5" y1="582.5" x2="1157.5" y2="582.5" stroke="#ccd6eb" stroke-width="1"/>
<line x1="880.5" y1="582.4" x2="880.5" y2="592.4" stroke="#ccd6eb" stroke-width="1"/>
<text x="881" y="600.9" text-anchor="middle" font-size="11" fill="#666666" textLength="27.53" lengthAdjust="spacingAndGlyphs" >10:34</text>
<line x1="943.5" y1="582.4" x2="943.5" y2="592.4" stroke="#ccd6eb" stroke-width="1"/>
<text x="944.25" y="600.9" text-anchor="middle" font-size="11" fill="#666666" textLength="27.53" lengthAdjust="spacingAndGlyphs" >10:36</text>
<line x1="1007.5" y1="582.4" x2="1007.5" y2="592.4" stroke="#ccd6eb" stroke-width="1"/>
<text x="1007.5" y="600.9" text-anchor="middle" font-size="11" fill="#666666" textLength="27.53" lengthAdjust="spacingAndGlyphs" >10:38</text>
<line x1="1070.5" y1="582.4" x2="1070.5" y2="592.4" stroke="#ccd6eb" stroke-width="1"/>
<text x="1070.75" y="600.9" text-anchor="middle" font-size="11" fill="#666666" textLength="27.53" lengthAdjust="spacingAndGlyphs" >10:40</text>
<line x1="1133.5" y1="582.4" x2="1133.5" y2="592.4" stroke="#ccd6eb" stroke-width="1"/>
<text x="1134" y="600.9" text-anchor="middle" font-size="11" fill="#666666" textLength="27.53" lengthAdjust="spacingAndGlyphs" >10:42</text>
<text x="1172.8" y="517.1" text-anchor="start" font-size="11" fill="#666666" textLength="18.36" lengthAdjust="spacingAndGlyphs" >100</text>
<text x="1172.8" y="586.9" text-anchor="start" font-size="11" fill="#666666" textLength="6.12" lengthAdjust="spacingAndGlyphs" >0</text>
<text transform="translate(1200.6,547) rotate(90)" text-anchor="middle" font-size="12" fill="#666666" textLength="53.36" lengthAdjust="spacingAndGlyphs">Usage(%)</text>
<path d="M846.18 535.83 C854.27 535.83 883.4 535.83 894.72 535.83 C906.05 535.73 910.1 535.19 914.14 535.19 C918.19 535.19 916.84 535.83 919 535.83 C921.15 535.83 920.88 535.3 927.09 535.19 C933.29 535.19 950.82 535.19 956.21 535.19 C959.45 535.24 956.21 535.46 959.45 535.51 C965.38 535.51 985.88 535.51 991.81 535.51 C995.05 535.4 992.35 534.92 995.05 534.86 C997.75 534.86 1002.17 535.19 1007.99 535.19 C1013.82 535.08 1025.52 534.24 1030 534.22 C1034.48 534.22 1032.16 534.94 1034.85 535.03 C1037.55 535.03 1043.48 534.89 1046.18 534.7 C1048.88 534.51 1047.8 533.97 1051.04 533.89 C1054.27 533.89 1061.01 534.11 1065.6 534.22 C1070.18 534.32 1075.04 534.54 1078.54 534.54 C1082.05 534.49 1084.48 533.89 1086.63 533.89 C1088.79 533.89 1087.71 534.43 1091.49 534.54 C1095.26 534.54 1105.78 534.54 1109.29 534.54 C1112.52 534.32 1109.56 533.46 1112.52 533.25 C1115.49 533.25 1123.58 533.25 1127.09 533.25 C1130.59 533.14 1131.4 532.6 1133.56 532.6 C1135.72 532.6 1137.34 533.14 1140.03 533.25 C1142.73 533.25 1147.18 533.25 1149.74 533.25 C1152.3 533.19 1154.46 532.98 1155.4 532.92" fill="none" stroke="#7cb5ec" stroke-width="2" stroke-linejoin="round" stroke-linecap="round"/>
<line x1="29" y1="348.5" x2="354.8" y2="348.5" stroke="#d8d8d8" stroke-width="1"/>
<line x1="29" y1="419.5" x2="354.8" y2="419.5" stroke="#ccd6eb" stroke-width="1"/>
<line x1="67.5" y1="419.4" x2="67.5" y2="429.4" stroke="#ccd6eb" stroke-width="1"/>
<text x="67.9" y="437.9" text-anchor="middle" font-size="11" fill="#666666" textLength="27.53" lengthAdjust="spacingAndGlyphs" >10:34</text>
<line x1="132.5" y1="419.4" x2="132.5" y2="429.4" stroke="#ccd6eb" stroke-width="1"/>
<text x="133.4" y="437.9" text-anchor="middle" font-size="11" fill="#666666" textLength="27.53" lengthAdjust="spacingAndGlyphs" >10:36</text>
<line x1="198.5" y1="419.4" x2="198.5" y2="429.4" stroke="#ccd6eb" stroke-width="1"/>
<text x="198.9" y="437.9" text-anchor="middle" font-size="11" fill="#666666" textLength="27.53" lengthAdjust="spacingAndGlyphs" >10:38</text>
<line x1="263.5" y1="419.4" x2="263.5" y2="429.4" stroke="#ccd6eb" stroke-width="1"/>
<text x="264.4" y="437.9" text-anchor="middle" font-size="11" fill="#666666" textLength="27.53" lengthAdjust="spacingAndGlyphs" >10:40</text>
<line x1="329.5" y1="419.4" x2="329.5" y2="429.4" stroke="#ccd6eb" stroke-width="1"/>
<text x="329.9" y="437.9" text-anchor="middle" font-size="11" fill="#666666" textLength="27.53" lengthAdjust="spacingAndGlyphs" >10:42</text>
<text x="370.1" y="354.1" text-anchor="start" font-size="11" fill="#666666" textLength="6.12" lengthAdjust="spacingAndGlyphs" >8</text>
<text x="370.1" y="423.9" text-anchor="start" font-size="11" fill="#666666" textLength="6.12" lengthAdjust="spacingAndGlyphs" >0</text>
<text transform="translate(386.1,384) rotate(90)" text-anchor="middle" font-size="12" fill="#666666" textLength="8.67" lengthAdjust="spacingAndGlyphs">C</text>
<polyline points="31.4,373 352.4,373" fill="none" stroke="#7cb5ec" stroke-width="2" stroke-linejoin="round" stroke-linecap="round"/>
<polyline points="31.4,384.5 352.4,384.5" fill="none" stroke="#f7a35c" stroke-width="2" stroke-linejoin="round" stroke-linecap="round"/>
<line x1="29" y1="511.5" x2="354.8" y2="511.5" stroke="#d8d8d8" stroke-width="1"/>
<line x1="29" y1="582.5" x2="354.8" y2="582.5" stroke="#ccd6eb" stroke-width="1"/>
<line x1="67.5" y1="582.4" x2="67.5" y2="592.4" stroke="#ccd6eb" stroke-width="1"/>
<text x="67.9" y="600.9" text-anchor="middle" font-size="11" fill="#666666" textLength="27.53" lengthAdjust="spacingAndGlyphs" >10:34</text>
<line x1="132.5" y1="582.4" x2="132.5" y2="592.4" stroke="#ccd6eb" stroke-width="1"/>
<text x="133.4" y="600.9" text-anchor="middle" font-size="11" fill="#666666" textLength="27.53" lengthAdjust="spacingAndGlyphs" >10:36</text>
<line x1="198.5" y1="582.4" x2="198.5" y2="592.4" stroke="#ccd6eb" stroke-width="1"/>
<text x="198.9" y="600.9" text-anchor="middle" font-size="11" fill="#666666" textLength="27.53" lengthAdjust="spacingAndGlyphs" >10:38</text>
<line x1="263.5" y1="582.4" x2="263.5" y2="592.4" stroke="#ccd6eb" stroke-width="1"/>
<text x="264.4" y="600.9" text-anchor="middle" font-size="11" fill="#666666" textLength="27.53" lengthAdjust="spacingAndGlyphs" >10:40</text>
<line x1="329.5" y1="582.4" x2="329.5" y2="592.4" stroke="#ccd6eb" stroke-width="1"/>
<text x="329.9" y="600.9" text-anchor="middle" font-size="11" fill="#666666" textLength="27.53" lengthAdjust="spacingAndGlyphs" >10:42</text>
<text x="370.1" y="517.1" text-anchor="start" font-size="11" fill="#666666" textLength="6.12" lengthAdjust="spacingAndGlyphs" >2</text>
<text x="370.1" y="586.9" text-anchor="start" font-size="11" fill="#666666" textLength="6.12" lengthAdjust="spacingAndGlyphs" >0</text>
<text transform="translate(386.1,547) rotate(90)" text-anchor="middle" font-size="12" fill="#666666" textLength="8.67" lengthAdjust="spacingAndGlyphs">C</text>
<path d="M31.8 570.5 C43 570.5 87.53 570.5 99 570.5 C100.6 570.77 100.07 572.1 100.6 572.1 C101.13 572.1 100.6 570.77 102.2 570.5 C112.17 570.5 150.23 570.5 160.4 570.5 C163.2 567.55 162.25 552.92 163.2 552.8 C164.15 552.8 165.15 569.8 166.1 569.8 C167.05 566.83 167.95 535 168.9 535 C169.85 535.12 168.9 564.58 171.8 570.5 C202.37 570.5 322.22 570.5 352.3 570.5" fill="none" stroke="#7cb5ec" stroke-width="2" stroke-linejoin="round" stroke-linecap="round"/><path d="M31.8 570.5 C47 570.5 107.5 570.5 123 570.5 C124.8 570.87 124.2 572.7 124.8 572.7 C125.4 572.7 124.8 570.87 126.6 570.5 C134.7 570.5 165.07 570.5 173.4 570.5 C176.6 567.55 175.52 555.75 176.6 552.8 C177.68 552.8 178.82 552.8 179.9 552.8 C180.98 555.75 179.9 567.55 183.1 570.5 C211.83 570.5 324.1 570.5 352.3 570.5" fill="none" stroke="#f7a35c" stroke-width="2" stroke-linejoin="round" stroke-linecap="round"/>
<line x1="29" y1="674.5" x2="354.8" y2="674.5" stroke="#d8d8d8" stroke-width="1"/>
<line x1="29" y1="745.5" x2="354.8" y2="745.5" stroke="#ccd6eb" stroke-width="1"/>
<line x1="67.5" y1="745.4" x2="67.5" y2="755.4" stroke="#ccd6eb" stroke-width="1"/>
<text x="67.9" y="763.9" text-anchor="middle" font-size="11" fill="#666666" textLength="27.53" lengthAdjust="spacingAndGlyphs" >10:34</text>
<line x1="132.5" y1="745.4" x2="132.5" y2="755.4" stroke="#ccd6eb" stroke-width="1"/>
<text x="133.4" y="763.9" text-anchor="middle" font-size="11" fill="#666666" textLength="27.53" lengthAdjust="spacingAndGlyphs" >10:36</text>
<line x1="198.5" y1="745.4" x2="198.5" y2="755.4" stroke="#ccd6eb" stroke-width="1"/>
<text x="198.9" y="763.9" text-anchor="middle" font-size="11" fill="#666666" textLength="27.53" lengthAdjust="spacingAndGlyphs" >10:38</text>
<line x1="263.5" y1="745.4" x2="263.5" y2="755.4" stroke="#ccd6eb" stroke-width="1"/>
<text x="264.4" y="763.9" text-anchor="middle" font-size="11" fill="#666666" textLength="27.53" lengthAdjust="spacingAndGlyphs" >10:40</text>
<line x1="329.5" y1="745.4" x2="329.5" y2="755.4" stroke="#ccd6eb" stroke-width="1"/>
<text x="329.9" y="763.9" text-anchor="middle" font-size="11" fill="#666666" textLength="27.53" lengthAdjust="spacingAndGlyphs" >10:42</text>
<text x="370.1" y="680.1" text-anchor="start" font-size="11" fill="#666666" textLength="6.12" lengthAdjust="spacingAndGlyphs" >2</text>
<text x="370.1" y="749.9" text-anchor="start" font-size="11" fill="#666666" textLength="6.12" lengthAdjust="spacingAndGlyphs" >0</text>
<text transform="translate(386.1,710) rotate(90)" text-anchor="middle" font-size="12" fill="#666666" textLength="32.03" lengthAdjust="spacingAndGlyphs">Count</text>
<polyline points="31.4,710 352.4,710" fill="none" stroke="#f7a35c" stroke-width="2" stroke-linejoin="round" stroke-linecap="round"/>
<line x1="436.3" y1="348.5" x2="762.1" y2="348.5" stroke="#d8d8d8" stroke-width="1"/>
<line x1="436.3" y1="419.5" x2="762.1" y2="419.5" stroke="#ccd6eb" stroke-width="1"/>
<line x1="474.5" y1="419.4" x2="474.5" y2="429.4" stroke="#ccd6eb" stroke-width="1"/>
<text x="475.2" y="437.9" text-anchor="middle" font-size="11" fill="#666666" textLength="27.53" lengthAdjust="spacingAndGlyphs" >10:34</text>
<line x1="540.5" y1="419.4" x2="540.5" y2="429.4" stroke="#ccd6eb" stroke-width="1"/>
<text x="540.7" y="437.9" text-anchor="middle" font-size="11" fill="#666666" textLength="27.53" lengthAdjust="spacingAndGlyphs" >10:36</text>
<line x1="605.5" y1="419.4" x2="605.5" y2="429.4" stroke="#ccd6eb" stroke-width="1"/>
<text x="606.2" y="437.9" text-anchor="middle" font-size="11" fill="#666666" textLength="27.53" lengthAdjust="spacingAndGlyphs" >10:38</text>
<line x1="671.5" y1="419.4" x2="671.5" y2="429.4" stroke="#ccd6eb" stroke-width="1"/>
<text x="671.7" y="437.9" text-anchor="middle" font-size="11" fill="#666666" textLength="27.53" lengthAdjust="spacingAndGlyphs" >10:40</text>
<line x1="736.5" y1="419.4" x2="736.5" y2="429.4" stroke="#ccd6eb" stroke-width="1"/>
<text x="737.2" y="437.9" text-anchor="middle" font-size="11" fill="#666666" textLength="27.53" lengthAdjust="spacingAndGlyphs" >10:42</text>
<text x="777.4" y="354.1" text-anchor="start" font-size="11" fill="#666666" textLength="6.12" lengthAdjust="spacingAndGlyphs" >4</text>
<text x="777.4" y="423.9" text-anchor="start" font-size="11" fill="#666666" textLength="6.12" lengthAdjust="spacingAndGlyphs" >0</text>
<text transform="translate(793.4,384) rotate(90)" text-anchor="middle" font-size="12" fill="#666666" textLength="32.03" lengthAdjust="spacingAndGlyphs">Count</text>
<polyline points="438.7,418.5 759.7,418.5" fill="none" stroke="#8085e9" stroke-width="1.4" stroke-linejoin="round" stroke-linecap="round"/>
<line x1="843.9" y1="674.5" x2="1169.7" y2="674.5" stroke="#d8d8d8" stroke-width="1"/>
<line x1="843.9" y1="745.5" x2="1169.7" y2="745.5" stroke="#ccd6eb" stroke-width="1"/>
<line x1="882.5" y1="745.4" x2="882.5" y2="755.4" stroke="#ccd6eb" stroke-width="1"/>
<text x="882.8" y="763.9" text-anchor="middle" font-size="11" fill="#666666" textLength="27.53" lengthAdjust="spacingAndGlyphs" >10:34</text>
<line x1="947.5" y1="745.4" x2="947.5" y2="755.4" stroke="#ccd6eb" stroke-width="1"/>
<text x="948.3" y="763.9" text-anchor="middle" font-size="11" fill="#666666" textLength="27.53" lengthAdjust="spacingAndGlyphs" >10:36</text>
<line x1="1013.5" y1="745.4" x2="1013.5" y2="755.4" stroke="#ccd6eb" stroke-width="1"/>
<text x="1013.8" y="763.9" text-anchor="middle" font-size="11" fill="#666666" textLength="27.53" lengthAdjust="spacingAndGlyphs" >10:38</text>
<line x1="1078.5" y1="745.4" x2="1078.5" y2="755.4" stroke="#ccd6eb" stroke-width="1"/>
<text x="1079.3" y="763.9" text-anchor="middle" font-size="11" fill="#666666" textLength="27.53" lengthAdjust="spacingAndGlyphs" >10:40</text>
<line x1="1144.5" y1="745.4" x2="1144.5" y2="755.4" stroke="#ccd6eb" stroke-width="1"/>
<text x="1144.8" y="763.9" text-anchor="middle" font-size="11" fill="#666666" textLength="27.53" lengthAdjust="spacingAndGlyphs" >10:42</text>
<text x="1185" y="680.1" text-anchor="start" font-size="11" fill="#666666" textLength="6.12" lengthAdjust="spacingAndGlyphs" >4</text>
<text x="1185" y="749.9" text-anchor="start" font-size="11" fill="#666666" textLength="6.12" lengthAdjust="spacingAndGlyphs" >0</text>
<text transform="translate(1201,710) rotate(90)" text-anchor="middle" font-size="12" fill="#666666" textLength="30.02" lengthAdjust="spacingAndGlyphs">Bytes</text>
<polyline points="846.3,744.5 1167.3,744.5" fill="none" stroke="#8085e9" stroke-width="1.4" stroke-linejoin="round" stroke-linecap="round"/>
</svg>
<div class="a" style="left:19.3px;top:339.3px;width:251.3px;height:60.6px;background:rgba(249,249,249,0.93);border:1px solid #7cb5ec;border-radius:3px;box-shadow:1px 1px 2px rgba(0,0,0,0.16)"></div>
<svg class="a" style="left:0;top:330px" width="280" height="80" viewBox="0 330 280 80" font-family="Liberation Sans, sans-serif" font-size="12" fill="#333">
<text x="27" y="358.7" font-weight="bold" textLength="112.77" lengthAdjust="spacingAndGlyphs">2023-02-07 10:39:05</text>
<circle cx="30.6" cy="370.3" r="2.7" fill="#7cb5ec"/>
<text x="34.3" y="373.7" textLength="226.58" lengthAdjust="spacingAndGlyphs">mariadb11:Connection Used Ratio: <tspan font-weight="bold">5.30 %</tspan></text>
<circle cx="30.6" cy="385.2" r="2.7" fill="#f7a35c"/>
<text x="34.3" y="388.6" textLength="227.47" lengthAdjust="spacingAndGlyphs">mariadb12:Connection Used Ratio: <tspan font-weight="bold">3.97 %</tspan></text>
</svg>
<svg class="a" style="left:0;top:0" width="1236" height="802"><g fill="none" stroke="#383838" stroke-width="1.1"><ellipse cx="818.45" cy="24.35" rx="3.9" ry="2.65"/><path d="M818.45 27 V30.6 M813.1 30.6 H823.8"/><path d="M826 21.3 H834.9 M828.6 21.3 V25.5 M832.5 21.3 V25.5 M826 25.5 H834.9 M825 27.5 H835.9"/><path d="M827 29.1 V32.7 H834.9"/><path d="M838.2 21.2 V29.4 Q840.5 29.6 843.7 29"/><path d="M845.6 20 V32.8 M845.6 25.4 H848"/><path d="M850.2 21.3 H857.5 V23.8 H850.5 V26.5 H858.3 M849.1 28.5 H859.3 M854.3 28.5 V32.8"/><path d="M863.6 22.1 Q860.2 27.4 863.6 32.7"/><path d="M866.1 21.3 H874.5 M870.3 21.6 Q869 24.2 866.2 25.6 M870.3 21.6 Q871.6 24.2 874.5 25.6 M865.1 27.5 H875.5 M870.3 27.5 V32.8"/><path d="M877.1 22.1 Q880.5 27.4 877.1 32.7"/><path d="M958.6 20.9 V22.3 M955.1 22.5 H961.7"/><ellipse cx="958.7" cy="25.75" rx="2.2" ry="1.3"/><path d="M963.5 20.9 V29.6 M963.5 24.4 H965.8 M957.3 29.1 V32.7 H964.8"/><path d="M968 21.2 H975.6 V23.8 M967 25.4 H977.6 M972.1 25.4 V27.3 M968 29.6 H975.6 V32.8"/><ellipse cx="982.5" cy="25.2" rx="2.45" ry="3.95"/><path d="M985 25.4 H988.1 M988.1 20 V32.8"/></g>
<g fill="none" stroke="#bdbdbd" stroke-width="1.1"><path d="M60.5 64 V65.5 M56 65.5 H65.5"/><ellipse cx="60.6" cy="68.5" rx="3.05" ry="0.8"/><path d="M60.6 69.3 V71.5 M55.1 71.5 H65.8"/><rect x="57.45" y="73.75" width="6.7" height="2.4"/></g>
<g fill="none" stroke="#e2e2e2" stroke-width="1.1"><path d="M236.7 66.3 H232.8 V73.5 H237 M238.5 64.4 V76.6 M238.5 70.2 H241.3 M241.3 64.2 V76.8"/><path d="M247.2 65.5 Q246.6 70.5 244.2 73.9 M247 69.6 Q248.6 72.4 250.8 73.9 M252.7 64.8 V76.8"/><path d="M257.7 64.8 V71.6 H264.5 V64.8 M257.7 68.7 H264.5 M261.1 71.6 V74.4 M255.5 74.4 H266"/><path d="M276.9 65.5 H269.5 V70.5 H276.9 M267.8 74.4 H278.2"/><path d="M279.3 71.4 H282.6"/><path d="M285 65.2 H291.3 V69.2 M285.2 67.3 H291.3 M284.1 69.4 H294.2 M285.2 71.4 H291.3 V73.5 H285.2 V76.6 H293.7"/><path d="M296.3 65.2 H301.8 V69.2 H296.3 V73.5 H302.2 M301.8 69.4 H304.4 M304.4 64.2 V76.8"/><path d="M313 65 Q311.8 69 308.3 71 M313 65 Q314.2 69 317.6 71 M307.7 74.4 H318"/><path d="M326.5 65.2 H320.6 V73.5 H326.5 M320.6 69.4 H326.3 M326.3 69.4 H328.7 M328.7 64.2 V76.8"/></g></svg><svg class="a" style="left:0;top:0" width="1236" height="802" font-family="Liberation Sans, sans-serif"><text x="45.10" y="37.70" font-size="10" fill="#777" textLength="21.10" lengthAdjust="spacingAndGlyphs">APM</text><text x="379.60" y="37.20" font-size="13.9" fill="#7b7b7b" font-weight="bold" textLength="61.50" lengthAdjust="spacingAndGlyphs">opennaru</text><text x="502.00" y="31.00" font-size="12.9" fill="#747474" textLength="154.30" lengthAdjust="spacingAndGlyphs">Search... - Shortcut - /, Ctl:</text><text x="72.00" y="74.70" font-size="12.5" fill="#b0b0b0" textLength="3.70" lengthAdjust="spacingAndGlyphs">/</text><text x="85.60" y="74.70" font-size="12.2" fill="#b9b9b9" textLength="35.20" lengthAdjust="spacingAndGlyphs">DBMS</text><text x="126.60" y="74.70" font-size="12.5" fill="#b0b0b0" textLength="4.40" lengthAdjust="spacingAndGlyphs">/</text><text x="140.50" y="74.70" font-size="12.2" fill="#b9b9b9" textLength="71.80" lengthAdjust="spacingAndGlyphs">Dashboards</text><text x="217.70" y="74.70" font-size="12.5" fill="#b0b0b0" textLength="4.30" lengthAdjust="spacingAndGlyphs">/</text><text x="103.40" y="115.80" font-size="13.3" fill="#444" textLength="29.50" lengthAdjust="spacingAndGlyphs">cloud</text><text x="142.20" y="115.50" font-size="11" fill="#fff" font-weight="bold" textLength="6.50" lengthAdjust="spacingAndGlyphs">2</text><text x="182.60" y="115.80" font-size="13.3" fill="#444" textLength="60.10" lengthAdjust="spacingAndGlyphs">mariadb12</text><text x="260.40" y="115.80" font-size="13.3" fill="#444" textLength="60.10" lengthAdjust="spacingAndGlyphs">mariadb11</text><text x="44.40" y="158.90" font-size="14" fill="#333" textLength="101.40" lengthAdjust="spacingAndGlyphs">cluster-server-info</text><text x="451.40" y="158.90" font-size="14" fill="#333" textLength="90.30" lengthAdjust="spacingAndGlyphs">Innodb Hit Ratio</text><text x="859.40" y="158.90" font-size="14" fill="#333" textLength="30.30" lengthAdjust="spacingAndGlyphs">cloud</text><text x="44.40" y="321.90" font-size="14" fill="#333" textLength="63.20" lengthAdjust="spacingAndGlyphs">Connection</text><text x="451.40" y="321.90" font-size="14" fill="#333" textLength="72.00" lengthAdjust="spacingAndGlyphs">Innodb Waits</text><text x="859.40" y="321.90" font-size="14" fill="#333" textLength="26.30" lengthAdjust="spacingAndGlyphs">CPU</text><text x="44.40" y="484.90" font-size="14" fill="#333" textLength="26.30" lengthAdjust="spacingAndGlyphs">QPS</text><text x="451.40" y="484.90" font-size="14" fill="#333" textLength="146.10" lengthAdjust="spacingAndGlyphs">Table Opencache Hit Ratio</text><text x="859.40" y="484.90" font-size="14" fill="#333" textLength="47.10" lengthAdjust="spacingAndGlyphs">Memory</text><text x="44.40" y="647.90" font-size="14" fill="#333" textLength="88.30" lengthAdjust="spacingAndGlyphs">Thread Running</text><text x="451.40" y="647.90" font-size="14" fill="#333" textLength="108.70" lengthAdjust="spacingAndGlyphs">Table Fullscan Ratio</text><text x="859.40" y="647.90" font-size="14" fill="#333" textLength="54.50" lengthAdjust="spacingAndGlyphs">I/O Usage</text><text x="49.30" y="207.90" font-size="10.5" fill="#5e8ba6" textLength="63.20" lengthAdjust="spacingAndGlyphs">Cluster Name</text><text x="115.20" y="209.20" font-size="19" fill="#ee0000" font-weight="bold" textLength="47.50" lengthAdjust="spacingAndGlyphs">cloud</text><text x="57.60" y="239.80" font-size="10.5" fill="#5e8ba6" textLength="23.20" lengthAdjust="spacingAndGlyphs">Total</text><text x="55.80" y="253.70" font-size="10.5" fill="#5e8ba6" textLength="26.60" lengthAdjust="spacingAndGlyphs">Cores</text><text x="104.80" y="254.70" font-size="17.6" fill="#ee0000" font-weight="bold" textLength="19.80" lengthAdjust="spacingAndGlyphs">16</text><text x="156.70" y="256.70" font-size="10.8" fill="#666" font-weight="bold" textLength="28.20" lengthAdjust="spacingAndGlyphs">Cores</text><text x="245.10" y="254.00" font-size="10.5" fill="#5e8ba6" textLength="47.90" lengthAdjust="spacingAndGlyphs">Total MEM</text><text x="331.30" y="254.90" font-size="17.6" fill="#ee0000" font-weight="bold" textLength="19.00" lengthAdjust="spacingAndGlyphs">31</text><text x="366.50" y="256.90" font-size="10.5" fill="#666" font-weight="bold" textLength="13.60" lengthAdjust="spacingAndGlyphs">GB</text><text x="864.10" y="208.00" font-size="11" fill="#5e8ba6" textLength="64.20" lengthAdjust="spacingAndGlyphs">Conn. Usage</text><text x="964.30" y="209.00" font-size="17.6" fill="#111" font-weight="bold" textLength="9.60" lengthAdjust="spacingAndGlyphs">5</text><text x="986.10" y="209.60" font-size="13" fill="#666" font-weight="bold" textLength="12.80" lengthAdjust="spacingAndGlyphs">%</text><text x="1059.60" y="208.00" font-size="11" fill="#5e8ba6" textLength="21.10" lengthAdjust="spacingAndGlyphs">QPS</text><text x="1159.70" y="209.00" font-size="17.6" fill="#111" font-weight="bold" textLength="10.50" lengthAdjust="spacingAndGlyphs">0</text><text x="1190.00" y="209.60" font-size="13" fill="#666" font-weight="bold" textLength="5.00" lengthAdjust="spacingAndGlyphs">-</text><text x="864.10" y="253.60" font-size="11" fill="#5e8ba6" textLength="21.20" lengthAdjust="spacingAndGlyphs">CPU</text><text x="939.30" y="253.00" font-size="17.6" fill="#111" font-weight="bold" textLength="34.60" lengthAdjust="spacingAndGlyphs">8.84</text><text x="986.10" y="255.50" font-size="13" fill="#666" font-weight="bold" textLength="12.80" lengthAdjust="spacingAndGlyphs">%</text><text x="1059.60" y="253.60" font-size="11" fill="#5e8ba6" textLength="25.90" lengthAdjust="spacingAndGlyphs">MEM</text><text x="1124.10" y="253.00" font-size="17.6" fill="#111" font-weight="bold" textLength="46.40" lengthAdjust="spacingAndGlyphs">69.38</text><text x="1181.60" y="255.50" font-size="13" fill="#666" font-weight="bold" textLength="12.80" lengthAdjust="spacingAndGlyphs">%</text><text x="26.60" y="801.00" font-size="11.5" fill="#dedede" textLength="199.20" lengthAdjust="spacingAndGlyphs">Opennaru, Inc. &copy; 2016, All Rights Reserved.</text><text x="241.40" y="801.00" font-size="11.5" fill="#dedede" textLength="261.60" lengthAdjust="spacingAndGlyphs">Version : 5.1.0, Build : 32a68, Time : 2023-01-19 11:30:34</text><text x="516.20" y="801.00" font-size="11.5" fill="#dedede" textLength="130.40" lengthAdjust="spacingAndGlyphs">[User Guide] [Quick Service]</text></svg>
</body></html>
